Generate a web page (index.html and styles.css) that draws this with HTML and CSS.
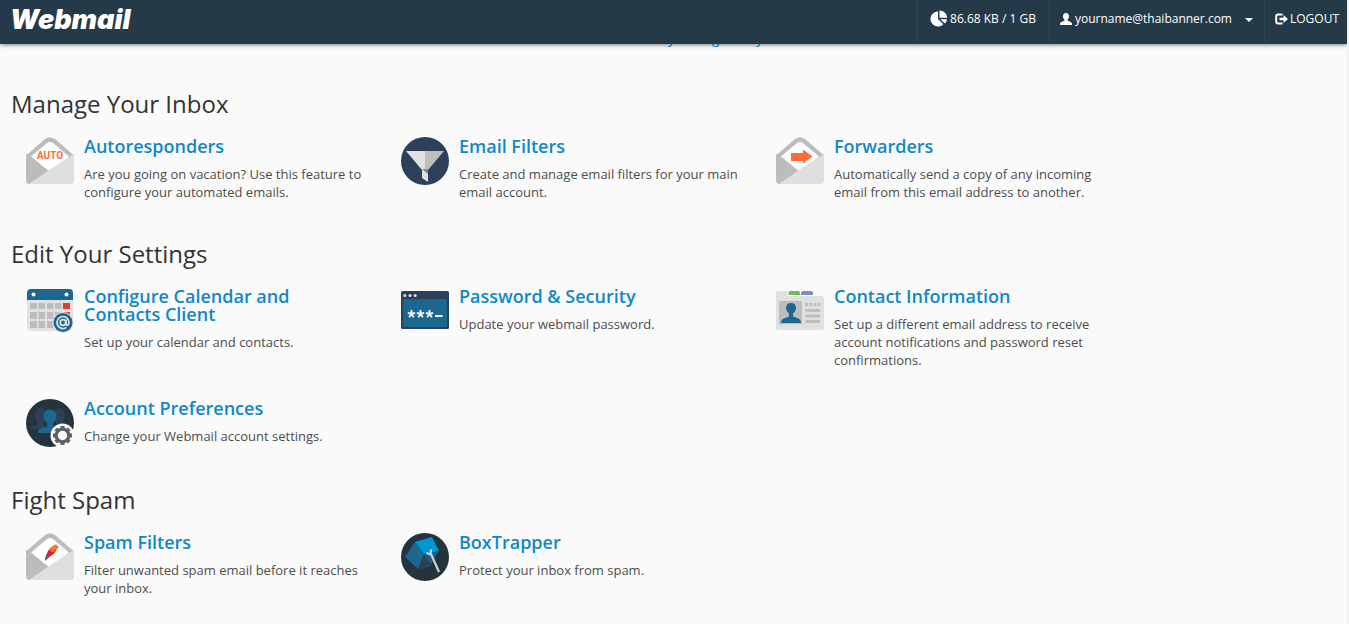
FILE: index.html
```html
<!DOCTYPE html>
<html lang="en">
<head>
<meta charset="utf-8">
<title>Webmail</title>
<link rel="stylesheet" href="styles.css">
</head>
<body>
<header class="topbar">
  <a class="logo" href="#">Webmail</a>
  <nav class="tools">
    <a class="tool tool-quota" href="#">
      <svg width="18" height="18" viewBox="0 0 18 18" fill="#fff"><path d="M8 1.500A7.500 7.500 0 1 0 13.300 14.300L8 9zM9.500 0.500v7.200h7.700A7.700 7.700 0 0 0 9.500 .5zM10.300 9.200l4.600 4.400a7 7 0 0 0 2.100-4.400z"/></svg>
      <span>86.68 KB / 1 GB</span>
    </a>
    <button class="tool tool-user" type="button">
      <svg width="12" height="12" viewBox="0 0 12 12" fill="#fff"><path d="M6 0c2 0 3 1.300 3 3.300 0 1.500-.6 2.700-1.400 3.300v1.200c1.700.8 4.400 1.200 4.400 3V12H0v-1.200c0-1.800 2.700-2.200 4.400-3V6.600C3.600 6 3 4.800 3 3.300 3 1.300 4 0 6 0z"/></svg>
      <span>yourname@thaibanner.com</span>
      <i class="caret"></i>
    </button>
    <a class="tool tool-logout" href="#">
      <svg width="13" height="12" viewBox="0 0 13 12"><path d="M7.500 1.500H3.200Q1.200 1.500 1.200 3.500v5Q1.200 10.500 3.200 10.500h4.300" fill="none" stroke="#fff" stroke-width="2"/><path d="M4.500 4.700h4V2l4.500 4-4.500 4V7.300h-4z" fill="#fff"/></svg>
      <span>LOGOUT</span>
    </a>
  </nav>
</header>
<main class="content">
  <a class="intro-link" href="#">my settings today</a>

  <section class="group">
    <h2 class="group-title">Manage Your Inbox</h2>
    <div class="items">
      <article class="item">
        <svg class="icon" viewBox="0 0 48 48"><path d="M0 18.500L19 2Q24-1.500 29 2l19 16.500V27H0z" fill="#bcbcbc"/><path d="M5 19.500L21 6q3-2 6 0l16 13.500-19 16z" fill="#fff"/><path d="M0 17l5 3 18 14L4 47Q0 47 0 43z" fill="#bcbcbc"/><path d="M48 17v27q0 3-4 3H3l20-14z" fill="#dfdfdf"/><text class="auto-label" x="24" y="22" text-anchor="middle">AUTO</text></svg>
        <div class="item-body"><h3><a href="#">Autoresponders</a></h3><p>Are you going on vacation? Use this feature to configure your automated emails.</p></div>
      </article>
      <article class="item">
        <svg class="icon" viewBox="0 0 48 48"><circle cx="24" cy="24" r="24" fill="#2c4059"/><path d="M5 14h19v19h-3z" fill="#e0e0e0"/><path d="M43 14H24v19h3z" fill="#bebebe"/><path d="M21 32h6v13l-6-4z" fill="#e0e0e0"/><path d="M21 32h6v5z" fill="#858585"/></svg>
        <div class="item-body"><h3><a href="#">Email Filters</a></h3><p>Create and manage email filters for your main email account.</p></div>
      </article>
      <article class="item">
        <svg class="icon" viewBox="0 0 48 48"><path d="M0 18.500L19 2Q24-1.500 29 2l19 16.500V27H0z" fill="#bcbcbc"/><path d="M5 19.500L21 6q3-2 6 0l16 13.500-19 16z" fill="#fff"/><path d="M0 17l5 3 18 14L4 47Q0 47 0 43z" fill="#bcbcbc"/><path d="M48 17v27q0 3-4 3H3l20-14z" fill="#dfdfdf"/><path d="M15 16h12v-3.500l9.500 7-9.500 7V24H15z" fill="#ff6c37"/></svg>
        <div class="item-body"><h3><a href="#">Forwarders</a></h3><p>Automatically send a copy of any incoming email from this email address to another.</p></div>
      </article>
    </div>
  </section>

  <section class="group">
    <h2 class="group-title">Edit Your Settings</h2>
    <div class="items">
      <article class="item">
        <svg class="icon" viewBox="0 0 48 48"><path d="M1 13h46v24q0 7-6 7H5q-4 0-4-4z" fill="#e2e2e2"/><path d="M5 2h38q4 0 4 4v7H1V6q0-4 4-4z" fill="#1b6790"/><circle cx="7.500" cy="7.500" r="2" fill="#fff"/><circle cx="40.500" cy="7.500" r="2" fill="#fff"/><path d="M4 16h7v6H4zM12.500 16h6.500v6h-6.500zM21 16h6.500v6H21zM29 16h6.500v6H29zM4 25h7v7H4zM12.500 25h6.500v7h-6.500zM21 25h6.500v7H21zM29 25h6.500v7H29zM4 34h7v7H4zM12.500 34h6.500v7h-6.500zM21 34h6.500v7H21z" fill="#bdbdbd"/><path d="M37 16h7v6h-7zM37 25h7v5h-7z" fill="#e53935"/><circle cx="37" cy="35.500" r="10.500" fill="#e2e2e2"/><circle cx="37" cy="35.500" r="9.500" fill="#1b6790"/><g fill="none" stroke="#e2e2e2" stroke-width="1.700"><circle cx="37" cy="35.500" r="2.800"/><path d="M40 32.500v4q0 2 1.500 1.700 1.700-.7 1.500-3.200a6 6 0 1 0-2.500 5.400"/></g></svg>
        <div class="item-body"><h3><a href="#">Configure Calendar and Contacts Client</a></h3><p>Set up your calendar and contacts.</p></div>
      </article>
      <article class="item">
        <svg class="icon" viewBox="0 0 48 48"><rect y="4" width="48" height="38" rx="1.500" fill="#2c4059"/><rect x="2" y="12" width="44" height="28" rx="1.500" fill="#1b6790"/><g fill="#e0e0e0"><circle cx="3.800" cy="8.500" r="1.500"/><circle cx="9" cy="8.500" r="1.500"/><circle cx="14.200" cy="8.500" r="1.500"/></g><path d="M10.500 27v-4M10.500 27l-3.700-1.200M10.500 27l3.700-1.200M10.500 27l-2.300 3.200M10.500 27l2.300 3.200M19.500 27v-4M19.500 27l-3.700-1.200M19.500 27l3.700-1.200M19.500 27l-2.300 3.200M19.500 27l2.300 3.200M28.500 27v-4M28.500 27l-3.700-1.200M28.500 27l3.700-1.200M28.500 27l-2.300 3.200M28.500 27l2.300 3.200M34 29h7.500" fill="none" stroke="#f0f0f0" stroke-width="1.900"/></svg>
        <div class="item-body"><h3><a href="#">Password &amp; Security</a></h3><p>Update your webmail password.</p></div>
      </article>
      <article class="item">
        <svg class="icon" viewBox="0 0 48 48"><path d="M12.500 8V6q0-2 2-2H22q2 0 2 2v2z" fill="#79b55d"/><path d="M25 8V6q0-2 2-2h8q2 0 2 2v2z" fill="#7b8cc0"/><path d="M2 4h8q1.500 0 1.500 2v3H46q2 0 2 2v30q0 2-2 2H2q-2 0-2-2V6q0-2 2-2z" fill="#e0e0e0"/><path d="M3 14h23v23H3z" fill="#bdbdbd"/><path d="M5 36q0-4 4-5l4-1.500v-3q-3-2.500-3-5.500 0-5 5-5t5 5q0 3-3 5.500v3l4 1.500q4 1 4 5z" fill="#1b6790"/><path d="M29 16h3v3h-3zM33.500 16h3v3h-3zM38 16h2.500v3H38zM42 16h2.500v3H42z" fill="#bdbdbd"/><path d="M30.500 23.500h12.500M30.500 29h12.500M30.500 34.500h12.500" stroke="#bdbdbd" stroke-width="2.800" stroke-linecap="round"/></svg>
        <div class="item-body"><h3><a href="#">Contact Information</a></h3><p>Set up a different email address to receive account notifications and password reset confirmations.</p></div>
      </article>
      <article class="item">
        <svg class="icon" viewBox="0 0 48 48"><circle cx="24" cy="24" r="24" fill="#24333c"/><path d="M5 30q0-3 3-3.500l3-1v-3q-2-3-1.500-7Q10 9 15 9t5 7q0 4-2 7v7zM43 30q0-3-3-3.500l-3-1v-3q2-3 1.500-7Q38 9 33 9t-5 7q0 4 2 7v7z" fill="#2c4059"/><path d="M12 34q0-4 4-5l5-1.500v-3q-3.500-4-3.500-7.500 0-6.500 6.500-6.500t6.500 6.500q0 3.500-3.500 7.500v3l5 1.500q4 1 4 5z" fill="#1b6790"/><circle cx="36.500" cy="36.500" r="12" fill="#fafafa"/><circle cx="36.500" cy="36.500" r="6.300" fill="none" stroke="#606060" stroke-width="3.200"/><path d="M36.500 27v4M36.500 42v4M27 36.500h4M42 36.500h4M29.800 29.800l2.500 2.500M40.700 40.700l2.500 2.500M43.200 29.800l-2.500 2.500M32.300 40.700l-2.500 2.500" stroke="#606060" stroke-width="4"/></svg>
        <div class="item-body"><h3><a href="#">Account Preferences</a></h3><p>Change your Webmail account settings.</p></div>
      </article>
    </div>
  </section>

  <section class="group">
    <h2 class="group-title">Fight Spam</h2>
    <div class="items">
      <article class="item">
        <svg class="icon" viewBox="0 0 48 48"><path d="M0 18.500L19 2Q24-1.500 29 2l19 16.500V27H0z" fill="#bcbcbc"/><path d="M5 19.500L21 6q3-2 6 0l16 13.500-19 16z" fill="#fff"/><path d="M0 17l5 3 18 14L4 47Q0 47 0 43z" fill="#bcbcbc"/><path d="M48 17v27q0 3-4 3H3l20-14z" fill="#dfdfdf"/><path d="M31 15q-1 5-7 8.500l-3.500 3-.8-3.500q1.300-5 5.800-9z" fill="#d92532"/><path d="M25 14.500q3-3.500 5.500-3 1.500 1 .8 3.500l-4 4-3.300-1z" fill="#f47b32"/><path d="M20.500 22q-2 2.500-1.500 6l4-3.500z" fill="#53649c"/><path d="M30.500 14.500l2-.5" stroke="#53649c"/></svg>
        <div class="item-body"><h3><a href="#">Spam Filters</a></h3><p>Filter unwanted spam email before it reaches your inbox.</p></div>
      </article>
      <article class="item">
        <svg class="icon" viewBox="0 0 48 48"><circle cx="24" cy="24" r="24" fill="#24333c"/><path d="M14 9L31 4l7 14-15 4z" fill="#0098d3"/><path d="M14 9l9 12-6 15L4 24z" fill="#1b6790"/><path d="M23 21l15-3-9 15-12 3z" fill="#1b5c83"/><path d="M23 21l7 11-13 4z" fill="#2c4059"/><path d="M25.500 20l4 1.500.5-5M30 21l8 18" fill="none" stroke="#d0d0d0" stroke-width="2.200"/></svg>
        <div class="item-body"><h3><a href="#">BoxTrapper</a></h3><p>Protect your inbox from spam.</p></div>
      </article>
    </div>
  </section>
</main>
</body>
</html>
```
FILE: styles.css
```css
* { box-sizing: border-box; }
html { background: #f0f0f0; }
body {
  margin: 0 2px 0 0;
  min-height: 100vh;
  background: #fafafa;
  color: #4d4d4d;
  font: 13px/18px "Open Sans", "Noto Sans", sans-serif;
}
a { color: #1088c8; text-decoration: none; }
h2, h3, p { margin: 0; }

.topbar {
  position: sticky;
  top: 0;
  z-index: 2;
  display: flex;
  justify-content: space-between;
  height: 44px;
  background: #253a49;
  box-shadow: 0 1px 4px rgba(0, 0, 0, .5);
}
.logo {
  padding-left: 10px;
  color: #fff;
  font: italic 900 27px/40px Inter, sans-serif;
}
.tools { display: flex; }
.tool {
  display: flex;
  align-items: center;
  gap: 3px;
  height: 43px;
  padding: 0 10px 6px;
  border: 0;
  border-left: 1px solid #2f4657;
  background: none;
  color: #fff;
  font: 12px/18px "Open Sans", "Noto Sans", sans-serif;
}
.tool-quota { gap: 2px; padding: 0 13px 6px 12px; }
.tool-logout { gap: 2px; padding-right: 8px; }
.caret {
  margin: 3px 1px 0 10px;
  border: 4px solid transparent;
  border-top-color: #fff;
  border-bottom: 0;
}

.content { padding: 0 11px; }
.intro-link {
  display: block;
  height: 37px;
  margin-top: -14px;
  padding-left: 645px;
}
.group { padding: 10px 0 30px; }
.intro-link + .group { padding-top: 24px; }
.group-title {
  margin-bottom: 20px;
  color: #333;
  font-size: 24px;
  font-weight: 400;
  line-height: 26px;
}
.items {
  display: grid;
  grid-template-columns: repeat(3, 1fr);
  row-gap: 30px;
  max-width: 1125px;
}
.item { display: flex; gap: 10px; padding: 0 20px 0 15px; }
.icon { flex: none; width: 48px; height: 48px; }
.auto-label { fill: #ff6c37; font: 700 10px Roboto, sans-serif; }
.item-body { flex: 1; }
.item h3 {
  margin-bottom: 10px;
  font-size: 18px;
  font-weight: 600;
  line-height: 18px;
}
```
